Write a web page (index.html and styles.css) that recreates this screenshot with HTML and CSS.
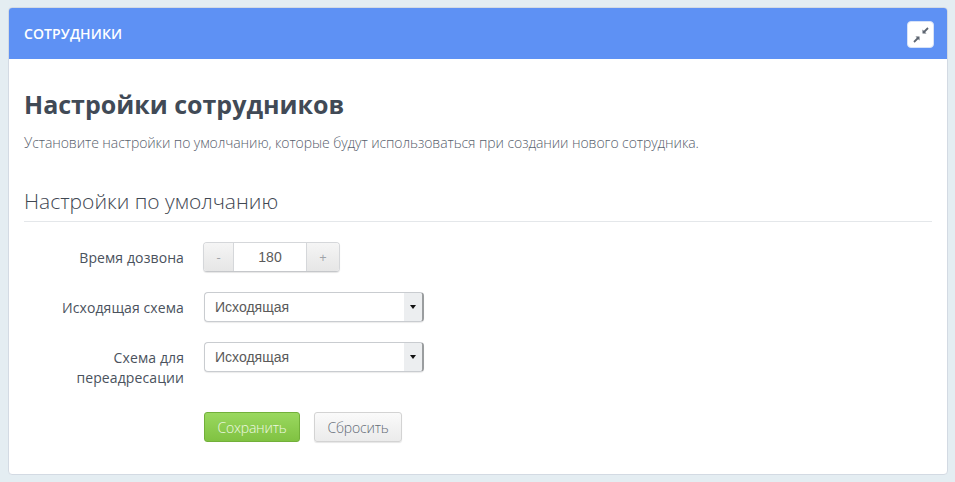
FILE: index.html
```html
<!DOCTYPE html>
<html lang="ru">
<head>
<meta charset="utf-8">
<title>Сотрудники</title>
<link rel="stylesheet" href="styles.css">
</head>
<body>
<section class="panel">
  <header class="panel-head">
    <span class="panel-title">СОТРУДНИКИ</span>
    <button class="collapse" type="button" aria-label="Свернуть">
      <svg width="16" height="16" viewBox="0 0 16 16"><path d="M15 1 10.5 5.5" fill="none" stroke="#5d6570" stroke-width="1.8"/><path d="M9.5 2.5V6.5H13.5Z" fill="#5d6570"/><path d="M1 15 5.5 10.5" fill="none" stroke="#5d6570" stroke-width="1.8"/><path d="M6.5 13.5V9.5H2.5Z" fill="#5d6570"/></svg>
    </button>
  </header>
  <div class="panel-body">
    <h1>Настройки сотрудников</h1>
    <p class="lead">Установите настройки по умолчанию, которые будут использоваться при создании нового сотрудника.</p>
    <h2>Настройки по умолчанию</h2>
    <form class="form">
      <div class="row row-spin">
        <label class="lbl">Время дозвона</label>
        <div class="spin">
          <span class="spin-btn spin-minus">-</span>
          <span class="spin-val">180</span>
          <span class="spin-btn spin-plus">+</span>
        </div>
      </div>
      <div class="row row-sel">
        <label class="lbl">Исходящая схема</label>
        <div class="select"><span class="sel-text">Исходящая</span><span class="sel-arrow"><i></i></span></div>
      </div>
      <div class="row row-sel2">
        <label class="lbl">Схема для переадресации</label>
        <div class="select"><span class="sel-text">Исходящая</span><span class="sel-arrow"><i></i></span></div>
      </div>
      <div class="actions">
        <button class="btn btn-save" type="button">Сохранить</button>
        <button class="btn btn-reset" type="button">Сбросить</button>
      </div>
    </form>
  </div>
</section>
</body>
</html>
```
FILE: styles.css
```css
* { box-sizing: border-box; }
html, body { height: 100%; }
body {
  margin: 0;
  padding: 7px 7px 0 8px;
  background: #e4edf2;
  font-family: "Open Sans", sans-serif;
  overflow: hidden;
}
.panel {
  width: 940px;
  height: 468px;
  background: #fff;
  border: 1px solid #d3dae3;
  border-radius: 4px;
  overflow: hidden;
}
.panel-head {
  height: 51px;
  margin: 0 -1px;
  background: #5e91f4;
  display: flex;
  align-items: center;
  justify-content: space-between;
  padding: 0 14px 0 16px;
}
.panel-title {
  color: #fff;
  font-size: 14px;
  font-weight: 600;
  letter-spacing: 0.1px;
}
.collapse {
  width: 27px;
  height: 27px;
  margin-top: 2px;
  padding: 0;
  border: 1px solid #d6e2f8;
  border-radius: 4px;
  background: #fff;
  display: flex;
  align-items: center;
  justify-content: center;
}
.panel-body { padding: 28px 15px 0; }
h1 {
  margin: 0;
  font-size: 25px;
  line-height: 34px;
  font-weight: 700;
  color: #414a56;
}
.lead {
  margin: 12px 0 0;
  font-size: 14px;
  line-height: 20px;
  font-weight: 300;
  color: #58616d;
  letter-spacing: -0.08px;
}
h2 {
  margin: 34px 0 0;
  padding-bottom: 6px;
  font-size: 21px;
  line-height: 28px;
  font-weight: 300;
  color: #3f4752;
  border-bottom: 1px solid #e4e7ea;
}
.form { font-family: "Liberation Sans", sans-serif; }
.row { display: flex; align-items: flex-start; }
.row-spin { margin-top: 20px; }
.row-sel { margin-top: 20px; }
.row-sel2 { margin-top: 20px; }
.lbl {
  width: 160px;
  padding-top: 6px;
  margin-right: 19px;
  text-align: right;
  font-family: "Open Sans", sans-serif;
  font-size: 14px;
  line-height: 20px;
  color: #4a525d;
  letter-spacing: 0.1px;
}
.row-sel .lbl,
.row-sel2 .lbl { margin-right: 20px; }
.spin {
  display: flex;
  height: 30px;
  width: 137px;
  border: 1px solid #d5d7da;
  border-bottom-color: #c5c7ca;
  border-radius: 4px;
  box-shadow: 0 1px 1px rgba(0,0,0,.1);
  overflow: hidden;
}
.spin-btn {
  flex: none;
  display: flex;
  align-items: center;
  justify-content: center;
  background: linear-gradient(#f5f5f5, #e6e6e6);
  color: #a0a4a9;
  font-family: "Open Sans", sans-serif;
  font-size: 13px;
}
.spin-minus { width: 29px; }
.spin-plus { width: 32px; }
.spin-val {
  flex: 1;
  background: #fff;
  border-left: 1px solid #d5d7da;
  border-right: 1px solid #d5d7da;
  text-align: center;
  font-size: 14px;
  line-height: 28px;
  color: #5a5a5a;
}
.select {
  width: 220px;
  height: 30px;
  display: flex;
  background: #fff;
  border: 1px solid #c9ccd0;
  border-right: 2px solid #9a9d9f;
  border-radius: 4px;
  box-shadow: 0 1px 1px rgba(0,0,0,.08);
  overflow: hidden;
}
.sel-text {
  flex: 1;
  padding-left: 10px;
  font-size: 14px;
  line-height: 28px;
  color: #5a5a5a;
}
.sel-arrow {
  width: 18px;
  background: #eceef0;
  display: flex;
  align-items: center;
  justify-content: center;
}
.sel-arrow i {
  width: 0;
  height: 0;
  border: 3.5px solid transparent;
  border-top: 4px solid #111;
  border-bottom: 0;
}
.actions {
  display: flex;
  gap: 14px;
  margin: 24px 0 0 180px;
}
.btn {
  height: 30px;
  padding: 0;
  border-radius: 3px;
  font-family: "Open Sans", sans-serif;
  font-size: 14px;
  font-weight: 300;
  letter-spacing: -0.2px;
}
.btn-save {
  width: 96px;
  color: #eef8e2;
  background: linear-gradient(#9ad85f, #80c242);
  border: 1px solid #72b03a;
}
.btn-reset {
  width: 88px;
  color: #636b76;
  background: linear-gradient(#fafafa, #ebebeb);
  border: 1px solid #d3d3d3;
  box-shadow: 0 1px 1px rgba(0,0,0,.1);
}
```
